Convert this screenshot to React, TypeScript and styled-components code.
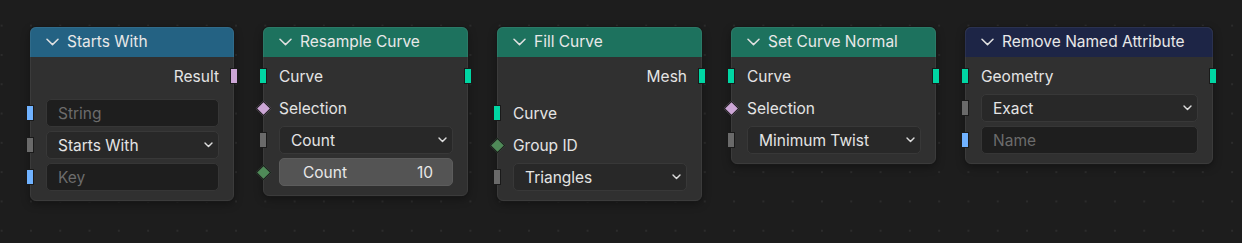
import React from 'react'
import styled, { createGlobalStyle, css } from 'styled-components'

const GlobalStyle = createGlobalStyle`
  html, body {
    margin: 0;
    padding: 0;
    background: #1d1d1d;
  }
  body {
    font-family: Inter, 'Noto Sans', sans-serif;
    -webkit-font-smoothing: antialiased;
  }
`

// цвета сокетов
const SOCKET = {
  geometry: '#00d6a3',
  string: '#70b2ff',
  menu: '#6a6a6a',
  bool: '#cca6d6',
  int: '#4f8a58',
}

type SocketKind = keyof typeof SOCKET

const Canvas = styled.div`
  width: 1242px;
  height: 243px;
  box-sizing: border-box;
  padding: 27px 0 0 30px;
  display: flex;
  align-items: flex-start;
  gap: 29px;
  background-color: #1d1d1d;
  background-image: radial-gradient(circle, #2c2c2c 0.8px, transparent 1.1px);
  background-size: 29.3px 29.3px;
  background-position: -13px 11px;
  overflow: hidden;
`

const Node = styled.div<{ $w: number }>`
  width: ${(p) => p.$w}px;
  box-sizing: border-box;
  background: #303030;
  border: 1px solid #3b3b3b;
  border-radius: 6px;
  box-shadow: 0 0 0 1px #181818, 0 3px 8px rgba(0, 0, 0, 0.35);
  color: #e4e4e4;
`

const Header = styled.div<{ $bg: string }>`
  height: 30px;
  box-sizing: border-box;
  display: flex;
  align-items: center;
  gap: 8px;
  padding: 0 0 2px 15px;
  margin: -1px -1px 0;
  background: ${(p) => p.$bg};
  border: 1px solid rgba(255, 255, 255, 0.06);
  border-bottom: none;
  border-radius: 6px 6px 0 0;
  font-size: 15.5px;
  color: #e8e8e8;
  white-space: nowrap;
`

const Body = styled.div`
  padding: 3px 0 7px;
`

const Row = styled.div<{ $out?: boolean }>`
  position: relative;
  height: 32px;
  display: flex;
  align-items: center;
  justify-content: ${(p) => (p.$out ? 'flex-end' : 'flex-start')};
  padding: 0 14px 0 15px;
  font-size: 15.5px;
`

const Spacer = styled.div`
  height: 5px;
`

const Socket = styled.span<{ $kind: SocketKind; $side: 'left' | 'right'; $diamond?: boolean }>`
  position: absolute;
  top: 50%;
  ${(p) => (p.$side === 'left' ? 'left: -5px;' : 'right: -5px;')}
  box-sizing: border-box;
  background: ${(p) => SOCKET[p.$kind]};
  ${(p) =>
    p.$diamond
      ? css`
          width: 11px;
          height: 11px;
          margin-top: -5.5px;
          ${p.$side === 'left' ? 'left: -6.5px;' : 'right: -6.5px;'}
          transform: rotate(45deg);
          border: 1px solid #1c1c1c;
        `
      : css`
          width: 8px;
          height: 16px;
          margin-top: -8px;
          border: 1px solid #1a1a1a;
        `}
`

const Field = styled.div<{ $kind: 'text' | 'menu' | 'slider' }>`
  flex: 1;
  height: 28px;
  box-sizing: border-box;
  display: flex;
  align-items: center;
  border-radius: 5px;
  font-size: 15.5px;
  ${(p) =>
    p.$kind === 'text' &&
    css`
      background: #1e1e1e;
      border: 1px solid #363636;
      padding-left: 11px;
      color: #6c6c6c;
    `}
  ${(p) =>
    p.$kind === 'menu' &&
    css`
      background: #282828;
      border: 1px solid #383838;
      padding: 0 5px 0 11px;
      justify-content: space-between;
      color: #e4e4e4;
    `}
  ${(p) =>
    p.$kind === 'slider' &&
    css`
      background: #545454;
      border: 1px solid #5c5c5c;
      padding: 0 19px 0 23px;
      justify-content: space-between;
      color: #e8e8e8;
    `}
`

const Chevron = ({ size = 'small' }: { size?: 'small' | 'big' }) =>
  size === 'big' ? (
    <svg width="13" height="8" viewBox="0 0 13 8">
      <path d="M1 1.2 L6.5 6.6 L12 1.2" fill="none" stroke="#e0e0e0" strokeWidth="1.5" strokeLinecap="round" strokeLinejoin="round" />
    </svg>
  ) : (
    <svg width="9" height="6" viewBox="0 0 9 6">
      <path d="M1 1 L4.5 4.6 L8 1" fill="none" stroke="#dcdcdc" strokeWidth="1.4" strokeLinecap="round" strokeLinejoin="round" />
    </svg>
  )

const NodeBox: React.FC<{ title: string; color: string; width: number; children: React.ReactNode }> = ({
  title,
  color,
  width,
  children,
}) => (
  <Node $w={width}>
    <Header $bg={color}>
      <Chevron size="big" />
      <span>{title}</span>
    </Header>
    <Body>{children}</Body>
  </Node>
)

const Menu = ({ value }: { value: string }) => (
  <Field $kind="menu">
    <span>{value}</span>
    <Chevron />
  </Field>
)

const BLUE = '#246283'
const GREEN = '#1d725e'
const NAVY = '#1d2546'

export default function App() {
  return (
    <>
      <GlobalStyle />
      <Canvas>
        <NodeBox title="Starts With" color={BLUE} width={204}>
          <Row $out>
            Result
            <Socket $kind="bool" $side="right" />
          </Row>
          <Spacer />
          <Row>
            <Socket $kind="string" $side="left" />
            <Field $kind="text">String</Field>
          </Row>
          <Row>
            <Socket $kind="menu" $side="left" />
            <Menu value="Starts With" />
          </Row>
          <Row>
            <Socket $kind="string" $side="left" />
            <Field $kind="text">Key</Field>
          </Row>
        </NodeBox>

        <NodeBox title="Resample Curve" color={GREEN} width={205}>
          <Row>
            <Socket $kind="geometry" $side="left" />
            Curve
            <Socket $kind="geometry" $side="right" />
          </Row>
          <Row>
            <Socket $kind="bool" $side="left" $diamond />
            Selection
          </Row>
          <Row>
            <Socket $kind="menu" $side="left" />
            <Menu value="Count" />
          </Row>
          <Row>
            <Socket $kind="int" $side="left" $diamond />
            <Field $kind="slider">
              <span>Count</span>
              <span>10</span>
            </Field>
          </Row>
        </NodeBox>

        <NodeBox title="Fill Curve" color={GREEN} width={205}>
          <Row $out>
            Mesh
            <Socket $kind="geometry" $side="right" />
          </Row>
          <Spacer />
          <Row>
            <Socket $kind="geometry" $side="left" />
            Curve
          </Row>
          <Row>
            <Socket $kind="int" $side="left" $diamond />
            Group ID
          </Row>
          <Row>
            <Socket $kind="menu" $side="left" />
            <Menu value="Triangles" />
          </Row>
        </NodeBox>

        <NodeBox title="Set Curve Normal" color={GREEN} width={205}>
          <Row>
            <Socket $kind="geometry" $side="left" />
            Curve
            <Socket $kind="geometry" $side="right" />
          </Row>
          <Row>
            <Socket $kind="bool" $side="left" $diamond />
            Selection
          </Row>
          <Row>
            <Socket $kind="menu" $side="left" />
            <Menu value="Minimum Twist" />
          </Row>
        </NodeBox>

        <NodeBox title="Remove Named Attribute" color={NAVY} width={248}>
          <Row>
            <Socket $kind="geometry" $side="left" />
            Geometry
            <Socket $kind="geometry" $side="right" />
          </Row>
          <Row>
            <Socket $kind="menu" $side="left" />
            <Menu value="Exact" />
          </Row>
          <Row>
            <Socket $kind="string" $side="left" />
            <Field $kind="text">Name</Field>
          </Row>
        </NodeBox>
      </Canvas>
    </>
  )
}
